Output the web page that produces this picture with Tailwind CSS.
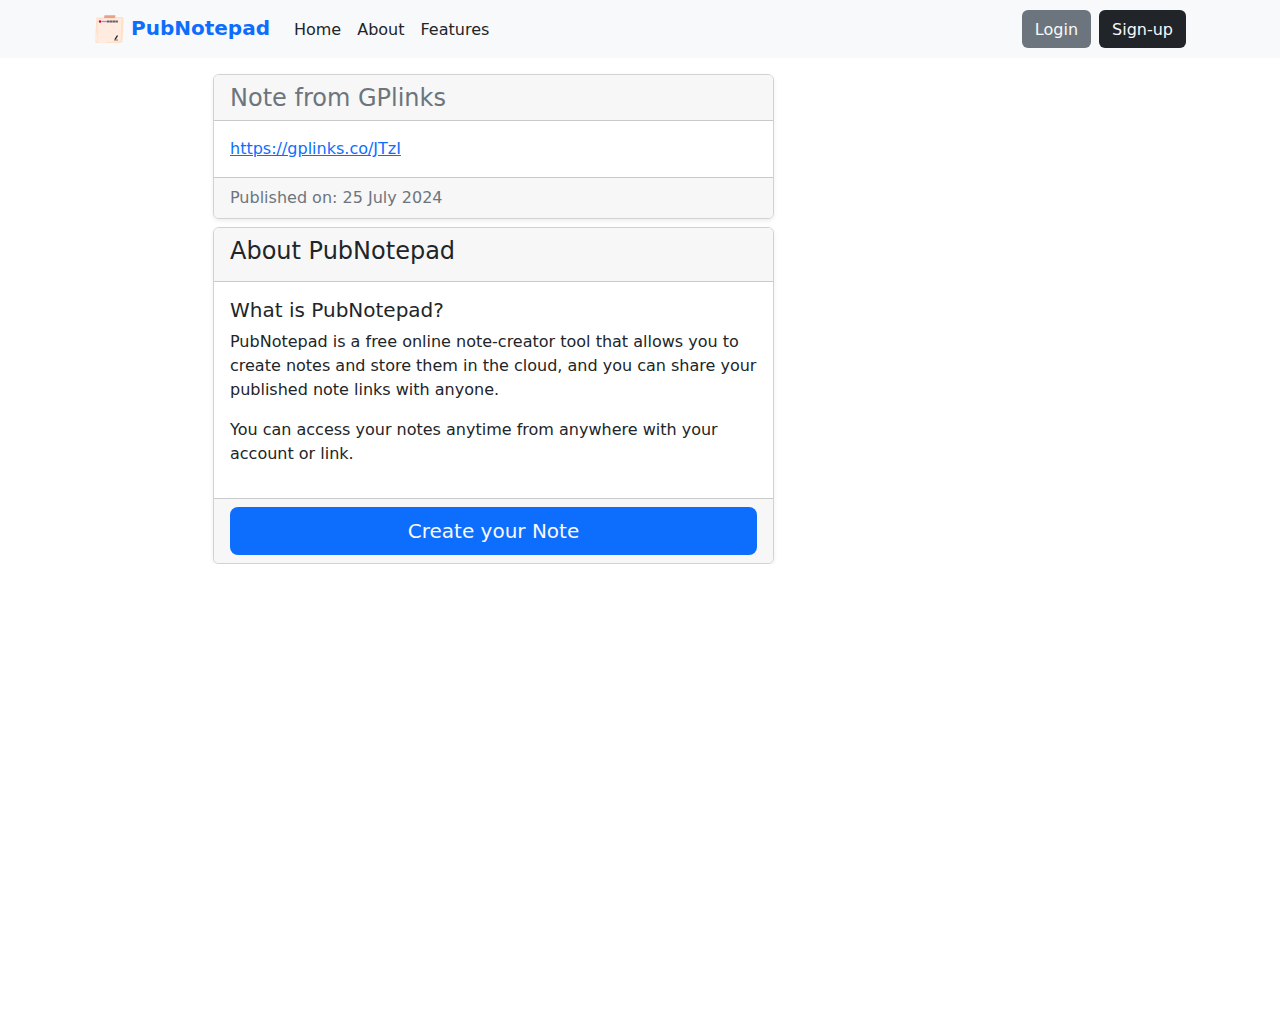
<!DOCTYPE html>
<html lang="en">

<head>
    <meta charset="utf-8" />
    <meta name="viewport" content="width=device-width, initial-scale=1.0" />
    <title>Note from GPlinks - PubNotepad</title>
    <script src="https://cdn.jsdelivr.net/npm/@tailwindcss/browser@4"></script>
</head>

<body class="bg-white font-['DejaVu_Sans',sans-serif] text-base text-[#212529]">
    <header class="bg-[#f8f9fa] py-[9px]">
        <nav class="mx-auto flex max-w-[1116px] flex-wrap items-center px-3">
            <a href="#" class="mr-4 flex items-center gap-[7px] text-xl font-bold text-[#0d6efd]">
                <svg class="h-[30px] w-[30px]" xmlns="http://www.w3.org/2000/svg" viewBox="0 0 30 30" fill="none" aria-hidden="true">
                    <path d="M2.500 3.500 28.500 3Q30 3.500 29.500 8L28.500 28 26 29 3 29Q.5 28.500 1 25Z" fill="#ffe0c9" />
                    <path d="M4 5 27.500 4.500 26.500 27 18 28 3.500 27.500Z" fill="#ffebdf" />
                    <path d="M2 19V27M4 28H12" stroke="#fff6ef" />
                    <path d="M10.500 1.200H21.500L21 4H10Z" fill="#e9a08b" />
                    <circle cx="6" cy="7.500" r="1.200" fill="#d6001c" />
                    <path d="M7.500 7.500H13" stroke="#a78bf5" stroke-width="1.400" />
                    <path d="M13 7.500H24" stroke="#6b5f60" stroke-width="1.800" stroke-dasharray="2.500 .3" />
                    <path d="M23.500 21.500 21 25.500" stroke="#222" stroke-width="1.400" />
                    <path d="M20 26H24" stroke="#555" stroke-width=".8" />
                </svg>
                <span class="pb-0.5 leading-[30px]">PubNotepad</span>
            </a>
            <ul class="flex grow">
                <li><a href="#" class="block px-2 pt-[9px] pb-[7px] leading-6">Home</a></li>
                <li><a href="#" class="block px-2 pt-[9px] pb-[7px] leading-6">About</a></li>
                <li><a href="#" class="block px-2 pt-[9px] pb-[7px] leading-6">Features</a></li>
            </ul>
            <div class="flex gap-2">
                <button type="button" class="rounded-md bg-[#6c757d] px-[13px] pt-2 pb-1.5 leading-6 text-[#f8f9fa]">Login</button>
                <button type="button" class="rounded-md bg-[#212529] px-[13px] pt-2 pb-1.5 leading-6 text-[#f8f9fa]">Sign-up</button>
            </div>
        </nav>
    </header>

    <main class="mx-auto max-w-[1116px] px-3 pt-4">
        <div class="flex flex-col gap-2 md:ml-[119px] md:max-w-[561px]">
            <article class="rounded-md border border-[#d2d2d2] bg-white shadow-[0_2px_4px_rgba(0,0,0,0.075)]">
                <div class="rounded-t-[5px] border-b border-[#c9c9c9] bg-[#f7f7f7] px-4 pt-2 pb-[7px]">
                    <h1 class="text-2xl leading-[30px] text-[#6c757d]">Note from GPlinks</h1>
                </div>
                <div class="p-4 leading-6">
                    <a href="#" class="text-[#0d6efd] underline">https://gplinks.co/JTzI</a>
                </div>
                <div class="rounded-b-[5px] border-t border-[#c9c9c9] bg-[#f7f7f7] px-4 py-2 leading-6 text-[#6c757d]">Published on: 25 July 2024</div>
            </article>

            <section class="rounded-md border border-[#d2d2d2] bg-white shadow-[0_2px_4px_rgba(0,0,0,0.075)]">
                <div class="rounded-t-[5px] border-b border-[#c9c9c9] bg-[#f7f7f7] px-4 pt-2 pb-[15px]">
                    <h2 class="text-2xl leading-[30px]">About PubNotepad</h2>
                </div>
                <div class="p-4 leading-6">
                    <h3 class="mb-2 text-xl leading-6">What is PubNotepad?</h3>
                    <p class="mb-4">PubNotepad is a free online note-creator tool that allows you to create notes and store them in the cloud, and you can share your published note links with anyone.</p>
                    <p class="mb-4">You can access your notes anytime from anywhere with your account or link.</p>
                </div>
                <div class="rounded-b-[5px] border-t border-[#c9c9c9] bg-[#f7f7f7] px-4 py-2">
                    <button type="button" class="block w-full rounded-lg bg-[#0d6efd] py-[9px] text-xl leading-[30px] text-[#f8f9fa]">Create your Note</button>
                </div>
            </section>
        </div>
    </main>
</body>

</html>
